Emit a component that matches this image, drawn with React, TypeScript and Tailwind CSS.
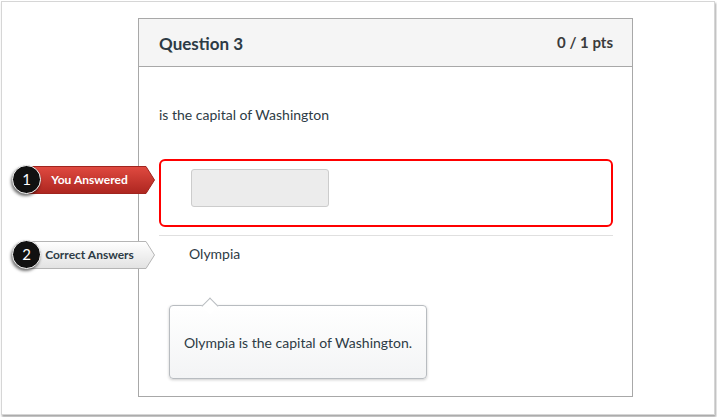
import React from "react";

function Callout({
  n,
  label,
  variant,
  top,
}: {
  n: number;
  label: string;
  variant: "red" | "gray";
  top: number;
}) {
  const red = variant === "red";
  return (
    <div className="absolute left-[12px] flex items-center" style={{ top }}>
      <div className="relative z-10 w-[29px] h-[29px] rounded-full bg-[#111] border border-white shadow-[-1px_2px_3px_rgba(0,0,0,0.55)] flex items-center justify-center text-white text-[15px]">
        {n}
      </div>
      {/* label shape */}
      <div className="relative -ml-[13px] w-[127px] h-[28px] flex items-center justify-center pl-[8px] pr-[12px]">
        <svg className="absolute inset-0" width="127" height="28" viewBox="0 0 127 28">
          <defs>
            <linearGradient id={`g${n}`} x1="0" y1="0" x2="0" y2="1">
              {red ? (
                <>
                  <stop offset="0" stopColor="#e04a40" />
                  <stop offset="1" stopColor="#ad2620" />
                </>
              ) : (
                <>
                  <stop offset="0" stopColor="#ffffff" />
                  <stop offset="1" stopColor="#e2e2e2" />
                </>
              )}
            </linearGradient>
          </defs>
          <polygon
            points="0.5,0.5 118,0.5 126.5,14 118,27.5 0.5,27.5"
            fill={`url(#g${n})`}
            stroke={red ? "#a0241e" : "#b5b5b5"}
            strokeWidth="1"
          />
        </svg>
        <span className={`relative text-[12px] font-bold ${red ? "text-white" : "text-[#2d3b45]"}`}>
          {label}
        </span>
      </div>
    </div>
  );
}

export default function App() {
  return (
    <div className="relative w-[717px] h-[417px] bg-white overflow-hidden font-['Lato','Liberation_Sans',sans-serif]">
      <div className="ml-[1px] mt-[1px] w-[714px] h-[414px] border border-[#d6d6d6] bg-white shadow-[1px_2px_2px_rgba(0,0,0,0.35)]">
        <div className="relative ml-[136px] mt-[16px] w-[495px] h-[379px] border border-[#a8a8a8] bg-white">
          <div className="h-[48px] bg-[#f5f5f5] border-b border-[#a8a8a8] px-[20px] flex items-center justify-between">
            <span className="text-[17px] font-bold text-[#2d3b45] mt-[2px]">Question 3</span>
            <span className="text-[15px] font-bold text-[#3b3b3b] mr-[-1px]">0 / 1 pts</span>
          </div>
          <div className="px-[20px] pt-[38px]">
            <p className="text-[14px] leading-[20px] text-[#2d3b45]">is the capital of Washington</p>
            <div className="mt-[34px] w-[454px] h-[68px] border-2 border-[#f00] rounded-[6px] pl-[30px] pt-[8px]">
              <div className="w-[138px] h-[38px] bg-[#ececec] border border-[#cccccc] rounded-[3px]" />
            </div>
            <div className="mt-[8px] w-[454px] h-px bg-[#e0e0e0]" />
            <p className="mt-[8px] pl-[30px] text-[14px] leading-[20px] text-[#2d3b45]">Olympia</p>
          </div>

          {/* popover */}
          <div className="absolute left-[30px] top-[286px] w-[258px] h-[74px] rounded-[4px] border border-[#b8bcc0] bg-gradient-to-b from-white to-[#f3f4f5] shadow-[0_1px_3px_rgba(0,0,0,0.2)] flex items-center justify-center text-[14px] text-[#2d3b45]">
            Olympia is the capital of Washington.
            <div className="absolute left-[34px] top-[-6px] w-[12px] h-[12px] rotate-45 bg-white border-l border-t border-[#b8bcc0]" />
          </div>
        </div>
      </div>

      <Callout n={1} label="You Answered" variant="red" top={165} />
      <Callout n={2} label="Correct Answers" variant="gray" top={240} />
    </div>
  );
}
